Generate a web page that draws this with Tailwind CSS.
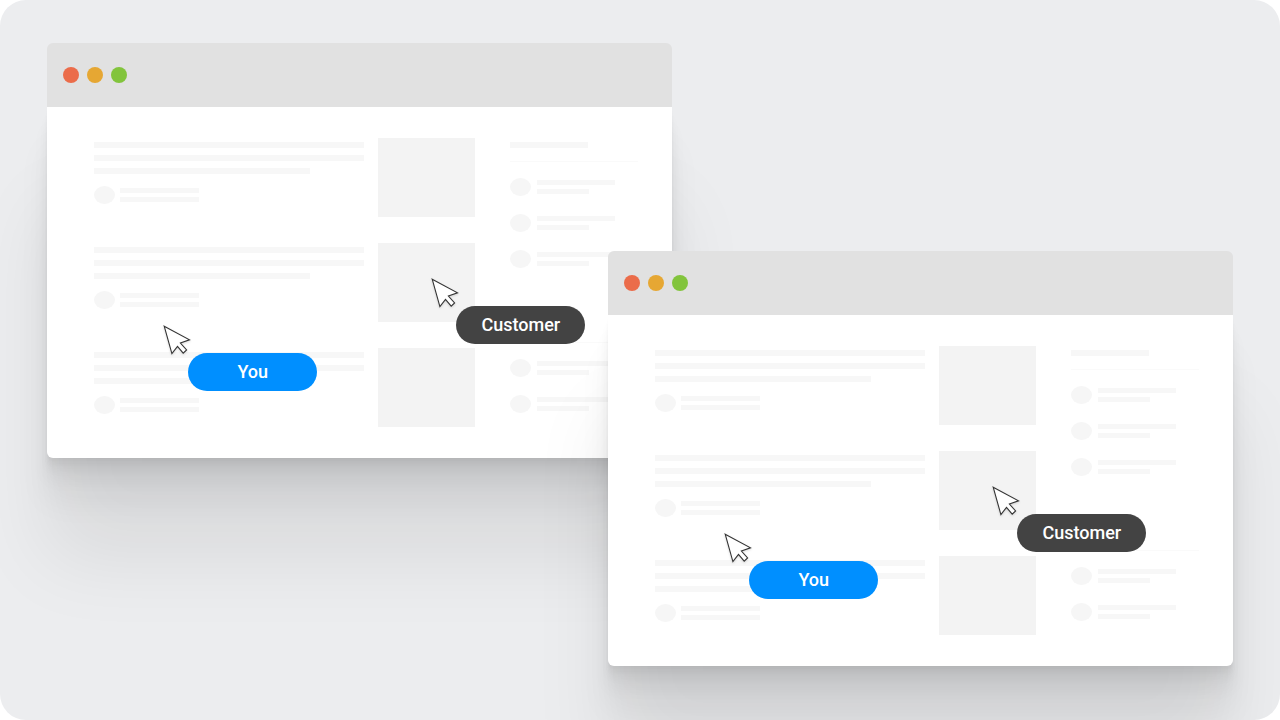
<!DOCTYPE html>
<html lang="en">

<head>
  <meta charset="UTF-8" />
  <meta name="viewport" content="width=device-width, initial-scale=1.0" />
  <title>Co-browsing</title>
  <script src="https://cdn.jsdelivr.net/npm/@tailwindcss/browser@4"></script>
</head>

<body class="bg-white font-['Roboto',sans-serif]">

  <main class="relative min-h-screen overflow-hidden rounded-[26px] bg-[#ecedef]">
    <div data-window class="absolute left-[47px] right-[47.5%] top-[43px]"></div>
    <div data-window class="absolute left-[47.5%] right-[47px] top-[251px]"></div>
  </main>

  <!-- Browser window -->
  <template id="window">
    <section class="relative">
      <header class="relative z-10 flex h-16 items-center gap-2 rounded-t-md bg-[#e1e1e1] px-4">
        <span class="size-4 rounded-full bg-[#eb6c4a]"></span>
        <span class="size-4 rounded-full bg-[#e6a733]"></span>
        <span class="size-4 rounded-full bg-[#82c43c]"></span>
      </header>

      <div
        class="flex gap-[35px] rounded-b-md bg-white py-[31px] pl-[47px] pr-[34px] shadow-[0_3px_2px_rgba(0,0,0,0.02),0_7px_5px_rgba(0,0,0,0.025),0_12px_10px_rgba(0,0,0,0.035),0_22px_18px_rgba(0,0,0,0.04),0_42px_33px_rgba(0,0,0,0.05),0_100px_80px_rgba(0,0,0,0.08)]">
        <!-- Articles -->
        <div data-articles class="flex flex-1 flex-col gap-[26px]"></div>

        <!-- Sidebar -->
        <aside class="w-32 pt-1">
          <div class="h-[6px] w-[78px] bg-[#f7f7f7]"></div>
          <div class="mt-[13px] h-px bg-[#fafafa]"></div>
          <div data-people="3" class="mt-4 flex flex-col gap-[18px]"></div>

          <div class="mt-[55px] h-[6px] w-16 bg-[#f7f7f7]"></div>
          <div class="mt-[13px] h-px bg-[#fafafa]"></div>
          <div data-people="2" class="mt-4 flex flex-col gap-[18px]"></div>
        </aside>
      </div>

      <!-- Cursors -->
      <div class="absolute left-[61.5%] top-[235px]">
        <svg class="block size-7 overflow-visible drop-shadow-[0_1px_1px_rgba(0,0,0,0.15)]" viewBox="0 0 28 28"
          fill="#fff" stroke="#333" stroke-width="1.1">
          <path d="M1.2 1.2 26.5 14.8 17.4 18l6.2 6.9-3.4 3.2-5.7-6.7-5.6 7.2Z" />
        </svg>
        <span
          class="ml-[25px] flex h-[38px] w-[129px] items-center justify-center rounded-full bg-[#434343] pb-[2px] text-[18px] font-medium text-white">Customer</span>
      </div>
      <div class="absolute left-[18.6%] top-[282px]">
        <svg class="block size-7 overflow-visible drop-shadow-[0_1px_1px_rgba(0,0,0,0.15)]" viewBox="0 0 28 28"
          fill="#fff" stroke="#333" stroke-width="1.1">
          <path d="M1.2 1.2 26.5 14.8 17.4 18l6.2 6.9-3.4 3.2-5.7-6.7-5.6 7.2Z" />
        </svg>
        <span
          class="ml-[25px] flex h-[38px] w-[129px] items-center justify-center rounded-full bg-[#008fff] pb-[2px] text-[18px] font-medium text-white">You</span>
      </div>
    </section>
  </template>

  <!-- Article row -->
  <template id="article">
    <article class="flex h-[79px] gap-[14px]">
      <div class="flex-1 pt-1">
        <div class="flex flex-col gap-[7px]">
          <div class="h-[6px] bg-[#f7f7f7]"></div>
          <div class="h-[6px] bg-[#f7f7f7]"></div>
          <div class="h-[6px] w-4/5 bg-[#f7f7f7]"></div>
        </div>
        <div class="mt-3 flex items-center gap-[5px]">
          <div class="h-[18px] w-[21px] rounded-[50%] bg-[#f6f6f6]"></div>
          <div class="flex flex-col gap-1">
            <div class="h-[5px] w-[79px] bg-[#f7f7f7]"></div>
            <div class="h-[5px] w-[79px] bg-[#f7f7f7]"></div>
          </div>
        </div>
      </div>
      <div class="w-[97px] bg-[#f3f3f3]"></div>
    </article>
  </template>

  <!-- Sidebar row -->
  <template id="person">
    <div class="flex items-center gap-[6px]">
      <div class="h-[18px] w-[21px] rounded-[50%] bg-[#f6f6f6]"></div>
      <div class="flex flex-col gap-1">
        <div class="h-[5px] w-[78px] bg-[#f7f7f7]"></div>
        <div class="h-[5px] w-[52px] bg-[#f7f7f7]"></div>
      </div>
    </div>
  </template>

  <script>
    // Append copies of a template to an element
    function fill(target, id, count) {
      const template = document.getElementById(id);
      for (let i = 0; i < count; i++) {
        target.appendChild(template.content.cloneNode(true));
      }
    }

    document.querySelectorAll('[data-window]').forEach((el) => {
      fill(el, 'window', 1);
      fill(el.querySelector('[data-articles]'), 'article', 3);
      el.querySelectorAll('[data-people]').forEach((list) => {
        fill(list, 'person', Number(list.dataset.people));
      });
    });
  </script>

</body>

</html>
